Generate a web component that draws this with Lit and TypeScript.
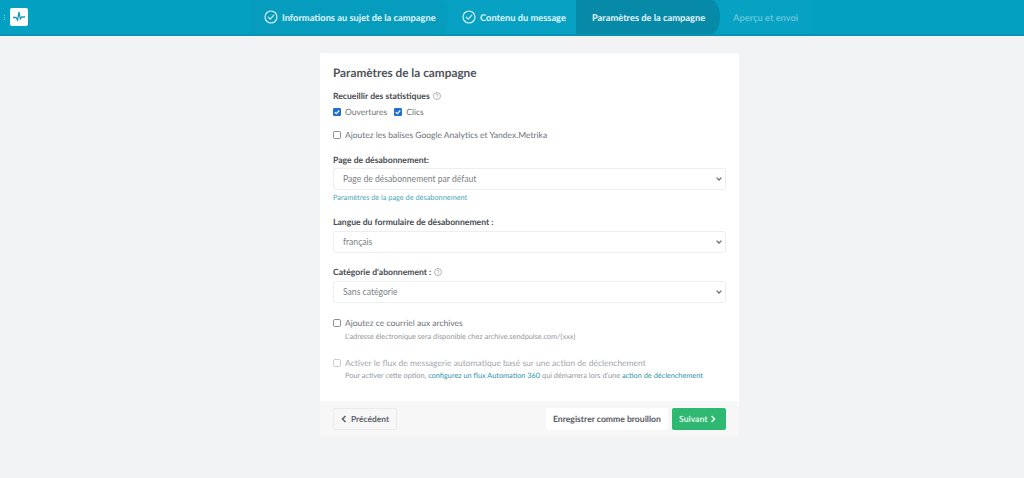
import { LitElement, html, css, svg } from "lit";
import { customElement } from "lit/decorators.js";

const check = html`<svg class="chk" viewBox="0 0 14 14" width="14" height="14" fill="none" stroke="#e4f5f9" stroke-width="1.1"><circle cx="7" cy="7" r="6"/><path d="M4.2 7.2 6.2 9.2 9.9 5.1" stroke-linecap="round" stroke-linejoin="round"/></svg>`;
const help = html`<svg class="help" viewBox="0 0 8 8" width="8" height="8" fill="none" stroke="#9aa3ad" stroke-width=".8"><circle cx="4" cy="4" r="3.5"/><path d="M3 3.1a1 1 0 1 1 1.4 1L4 4.6M4 5.6v.5"/></svg>`;
const on = html`<svg class="box" viewBox="0 0 8 8" width="8" height="8"><rect width="8" height="8" rx="1.3" fill="#1f6fd1"/><path d="M1.7 4.1 3.3 5.7 6.3 2.5" fill="none" stroke="#fff" stroke-width="1.1"/></svg>`;
const off = html`<svg class="box" viewBox="0 0 8 8" width="8" height="8"><rect x=".5" y=".5" width="7" height="7" rx="1.3" fill="#fff" stroke="#8a8d91"/></svg>`;
const offDis = html`<svg class="box" viewBox="0 0 8 8" width="8" height="8"><rect x=".5" y=".5" width="7" height="7" rx="1.3" fill="#fff" stroke="#c9cbce"/></svg>`;
const caret = html`<svg class="caret" viewBox="0 0 6 4" width="6" height="4" fill="none" stroke="#6d7074" stroke-width="1.3"><path d="M.6.6 3 3 5.4.6"/></svg>`;

@customElement("app-root")
export class AppRoot extends LitElement {
  static styles = css`
    :host { display: block; height: 478px; background: #f2f3f5; font-family: Lato, "Open Sans", sans-serif; color: #4e5258; overflow: hidden; text-rendering: geometricPrecision; }
    * { box-sizing: border-box; }
    .top { height: 36px; background: #04a0c2; border-bottom: 2px solid #0793b2; display: flex; }
    .brand { width: 250px; display: flex; align-items: center; padding-left: 4px; gap: 5px; }
    .dots { display: flex; flex-direction: column; gap: 1px; }
    .dots i { width: 1px; height: 1px; background: #7fd0e2; }
    .logo { width: 18px; height: 18px; background: #fff; border-radius: 2px; display: flex; align-items: center; justify-content: center; }
    .steps { display: flex; }
    .step { display: flex; align-items: center; gap: 4px; font-size: 9.3px; font-weight: 700; color: #e4f5f9; white-space: nowrap; }
    .s1 { width: 198px; padding-left: 14px; background: #069cbd; border-radius: 0 8px 8px 0 / 0 18px 18px 0; }
    .s2 { width: 128px; padding-left: 14px; background: #06a1c3; }
    .s3 { width: 144px; padding-left: 16px; background: #0789a8; border-radius: 0 10px 10px 0 / 0 18px 18px 0; color: #eaf6f9; }
    .s4 { width: 90px; padding-left: 13px; color: #64c4da; background: #06a1c3; }
    .chk { flex: none; }
    .page { display: flex; justify-content: center; padding: 17px 0 0 35px; }
    .card { width: 419px; height: 383px; background: #fff; border-radius: 3px; display: flex; flex-direction: column; }
    .body { flex: 1; padding: 12px 13px 0; }
    h1 { margin: 0 0 10px; font-size: 11.8px; line-height: 15px; font-weight: 700; color: #505459; }
    .lab { font-size: 8.6px; line-height: 12px; font-weight: 700; color: #484c51; display: flex; align-items: center; gap: 3px; }
    .row { display: flex; align-items: center; gap: 7px; margin-top: 4px; }
    .cb { display: flex; align-items: center; gap: 4px; font-size: 8.5px; line-height: 12px; color: #6e7277; }
    .box { flex: none; }
    .m13 { margin-top: 13px; }
    .m14 { margin-top: 14px; }
    .m15 { margin-top: 15px; }
    .m11 { margin-top: 11px; }
    .wrap { position: relative; margin-top: 3px; height: 22px; }
    .wrap.first { margin-top: 2px; }
    .sel { display: block; width: 100%; height: 22px; padding: 0 9px; border: 1px solid #eceef0; border-radius: 3px; background: #fff; font: inherit; font-size: 8.6px; color: #7b7f84; appearance: none; }
    .caret { position: absolute; right: 4px; top: 9px; }
    .link { font-size: 7.35px; line-height: 10px; color: #4aa6b9; margin-top: 3px; }
    .note { font-size: 7.35px; line-height: 10px; color: #94989c; padding-left: 12px; margin-top: 3px; }
    .note.tight { margin-top: 2px; }
    .note span { color: #2f93a8; }
    .dis { color: #a3a6aa; }
    .foot { height: 35px; background: #f7f7f8; display: flex; align-items: center; padding: 0 13px; flex: none; }
    .btn { height: 22px; display: inline-flex; align-items: center; gap: 4px; font-size: 8.4px; font-weight: 700; border-radius: 2px; padding: 0 7px; white-space: nowrap; }
    .prev { border: 1px solid #e9eaec; color: #5f6368; width: 64px; }
    .sp { flex: 1; }
    .draft { background: #fff; color: #565a5f; margin-right: 4px; width: 122px; font-size: 8.6px; }
    .next { background: #2fb872; color: #dff5e9; width: 54px; font-size: 8.6px; gap: 3px; }
  `;
  render() {
    const arrow = (d: string, c: string) => html`<svg width="6" height="8" viewBox="0 0 6 8" fill="none" stroke=${c} stroke-width="1.6">${svg`<path d=${d} />`}</svg>`;
    return html`
      <div class="top">
        <div class="brand">
          <div class="dots"><i></i><i></i><i></i></div>
          <div class="logo"><svg width="14" height="12" viewBox="0 0 14 12" fill="none" stroke="#1a9ab8" stroke-width="1.3"><path d="M1 6.5h3l1.6 2.6L7 1l1.4 7 1.4-2h3.2"/></svg></div>
        </div>
        <div class="steps">
          <div class="step s1">${check}Informations au sujet de la campagne</div>
          <div class="step s2">${check}Contenu du message</div>
          <div class="step s3">Paramètres de la campagne</div>
          <div class="step s4">Aperçu et envoi</div>
        </div>
      </div>
      <div class="page">
        <div class="card">
          <div class="body">
            <h1>Paramètres de la campagne</h1>
            <div class="lab">Recueillir des statistiques ${help}</div>
            <div class="row">
              <div class="cb">${on}Ouvertures</div>
              <div class="cb">${on}Clics</div>
            </div>
            <div class="row m11"><div class="cb">${off}Ajoutez les balises Google Analytics et Yandex.Metrika</div></div>
            <div class="lab m13">Page de désabonnement:</div>
            <div class="wrap first"><select class="sel"><option>Page de désabonnement par défaut</option></select>${caret}</div>
            <div class="link">Paramètres de la page de désabonnement</div>
            <div class="lab m13">Langue du formulaire de désabonnement :</div>
            <div class="wrap"><select class="sel"><option>français</option></select>${caret}</div>
            <div class="lab m13">Catégorie d'abonnement : ${help}</div>
            <div class="wrap"><select class="sel"><option>Sans catégorie</option></select>${caret}</div>
            <div class="row m14"><div class="cb">${off}Ajoutez ce courriel aux archives</div></div>
            <div class="note">L'adresse électronique sera disponible chez archive.sendpulse.com/{xxx}</div>
            <div class="row m15"><div class="cb dis">${offDis}Activer le flux de messagerie automatique basé sur une action de déclenchement</div></div>
            <div class="note tight">Pour activer cette option, <span>configurez un flux Automation 360</span> qui démarrera lors d'une <span>action de déclenchement</span></div>
          </div>
          <div class="foot">
            <div class="btn prev">${arrow("M4.5 1 1.5 4l3 3", "#5f6368")}Précédent</div>
            <div class="sp"></div>
            <div class="btn draft">Enregistrer comme brouillon</div>
            <div class="btn next">Suivant ${arrow("M1.5 1l3 3-3 3", "#dff5e9")}</div>
          </div>
        </div>
      </div>
    `;
  }
}
